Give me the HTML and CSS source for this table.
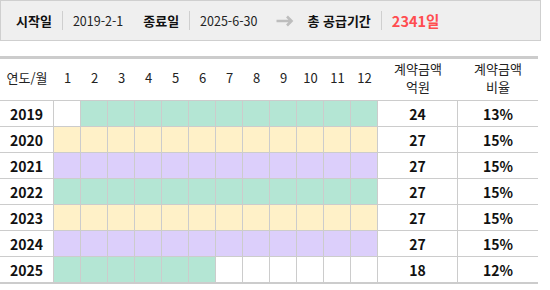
FILE: index.html
```html
<!DOCTYPE html>
<html lang="ko">
<head>
<meta charset="utf-8">
<link rel="stylesheet" href="styles.css">
</head>
<body>
<div class="summary">
  <span class="label">시작일</span><span class="sep"></span><span class="value">2019-2-1</span>
  <span class="label gap">종료일</span><span class="sep"></span><span class="value">2025-6-30</span>
  <svg class="arrow" width="18" height="12" viewBox="0 0 18 12"><path d="M0.5 6H16M11 1.5L15.5 6L11 10.5" stroke="#bdbdbd" stroke-width="2.6" fill="none"/></svg>
  <span class="label">총 공급기간</span><span class="sep"></span><span class="total">2341일</span>
</div>

<div class="grid">
  <div class="row head">
    <div class="c">연도/월</div>
    <div class="c">1</div><div class="c">2</div><div class="c">3</div><div class="c">4</div><div class="c">5</div><div class="c">6</div>
    <div class="c">7</div><div class="c">8</div><div class="c">9</div><div class="c">10</div><div class="c">11</div><div class="c">12</div>
    <div class="c two">계약금액<br>억원</div>
    <div class="c two">계약금액<br>비율</div>
  </div>

  <div class="row data">
    <div class="c y">2019</div>
    <div class="c"></div><div class="c g"></div><div class="c g"></div><div class="c g"></div><div class="c g"></div><div class="c g"></div>
    <div class="c g"></div><div class="c g"></div><div class="c g"></div><div class="c g"></div><div class="c g"></div><div class="c g"></div>
    <div class="c n">24</div><div class="c n last">13%</div>
  </div>
  <div class="row data">
    <div class="c y">2020</div>
    <div class="c w"></div><div class="c w"></div><div class="c w"></div><div class="c w"></div><div class="c w"></div><div class="c w"></div>
    <div class="c w"></div><div class="c w"></div><div class="c w"></div><div class="c w"></div><div class="c w"></div><div class="c w"></div>
    <div class="c n">27</div><div class="c n last">15%</div>
  </div>
  <div class="row data">
    <div class="c y">2021</div>
    <div class="c p"></div><div class="c p"></div><div class="c p"></div><div class="c p"></div><div class="c p"></div><div class="c p"></div>
    <div class="c p"></div><div class="c p"></div><div class="c p"></div><div class="c p"></div><div class="c p"></div><div class="c p"></div>
    <div class="c n">27</div><div class="c n last">15%</div>
  </div>
  <div class="row data">
    <div class="c y">2022</div>
    <div class="c g"></div><div class="c g"></div><div class="c g"></div><div class="c g"></div><div class="c g"></div><div class="c g"></div>
    <div class="c g"></div><div class="c g"></div><div class="c g"></div><div class="c g"></div><div class="c g"></div><div class="c g"></div>
    <div class="c n">27</div><div class="c n last">15%</div>
  </div>
  <div class="row data">
    <div class="c y">2023</div>
    <div class="c w"></div><div class="c w"></div><div class="c w"></div><div class="c w"></div><div class="c w"></div><div class="c w"></div>
    <div class="c w"></div><div class="c w"></div><div class="c w"></div><div class="c w"></div><div class="c w"></div><div class="c w"></div>
    <div class="c n">27</div><div class="c n last">15%</div>
  </div>
  <div class="row data">
    <div class="c y">2024</div>
    <div class="c p"></div><div class="c p"></div><div class="c p"></div><div class="c p"></div><div class="c p"></div><div class="c p"></div>
    <div class="c p"></div><div class="c p"></div><div class="c p"></div><div class="c p"></div><div class="c p"></div><div class="c p"></div>
    <div class="c n">27</div><div class="c n last">15%</div>
  </div>
  <div class="row data lastrow">
    <div class="c y">2025</div>
    <div class="c g"></div><div class="c g"></div><div class="c g"></div><div class="c g"></div><div class="c g"></div><div class="c g"></div>
    <div class="c"></div><div class="c"></div><div class="c"></div><div class="c"></div><div class="c"></div><div class="c"></div>
    <div class="c n">18</div><div class="c n last">12%</div>
  </div>
</div>
</body>
</html>
```

FILE: styles.css
```css
* { box-sizing: border-box; }
html, body { margin: 0; padding: 0; background: #fff; }
body {
  font-family: "Noto Sans CJK KR", "Noto Sans", sans-serif;
  color: #111;
}

.summary {
  width: 541px;
  height: 41px;
  border: 1px solid #cfcfcf;
  background: #efefef;
  display: flex;
  align-items: center;
  padding-left: 15px;
  font-size: 13px;
  line-height: 18px;
}
.summary .label { font-weight: 700; color: #111; }
.summary .label.gap { margin-left: 20px; }
.summary .sep {
  width: 1px;
  height: 19px;
  background: #cfcfcf;
  margin: 0 10px;
}
.summary .value { color: #222; font-size: 12.5px; }
.summary .arrow { margin: 0 13px 0 19px; }
.summary .total {
  color: #ff4d4f;
  font-weight: 700;
  font-size: 14.5px;
}

.grid {
  width: 538px;
  margin-top: 15px;
  border-top: 3px solid #cccccc;
  border-bottom: 2px solid #cccccc;
}
.row {
  display: grid;
  grid-template-columns: 54px repeat(12, 27px) 80px 80px;
}
.row .c {
  display: flex;
  align-items: center;
  justify-content: center;
  text-align: center;
}
.head {
  height: 42px;
  border-bottom: 1px solid #cccccc;
  font-size: 13px;
  line-height: 18px;
  color: #222;
}
.head .c { padding-bottom: 3px; }
.head .two { padding-bottom: 4px; }

.data {
  height: 26px;
  border-bottom: 1px solid #cccccc;
}
.data.lastrow { height: 25px; border-bottom: 0; }
.data .c {
  border-right: 1px solid #cccccc;
  font-size: 14px;
  font-weight: 700;
  line-height: 18px;
  color: #111;
}
.data .c.last { border-right: 0; }
.g { background: #b4e6d4; }
.w { background: #fff1c8; }
.p { background: #dccffb; }
```
